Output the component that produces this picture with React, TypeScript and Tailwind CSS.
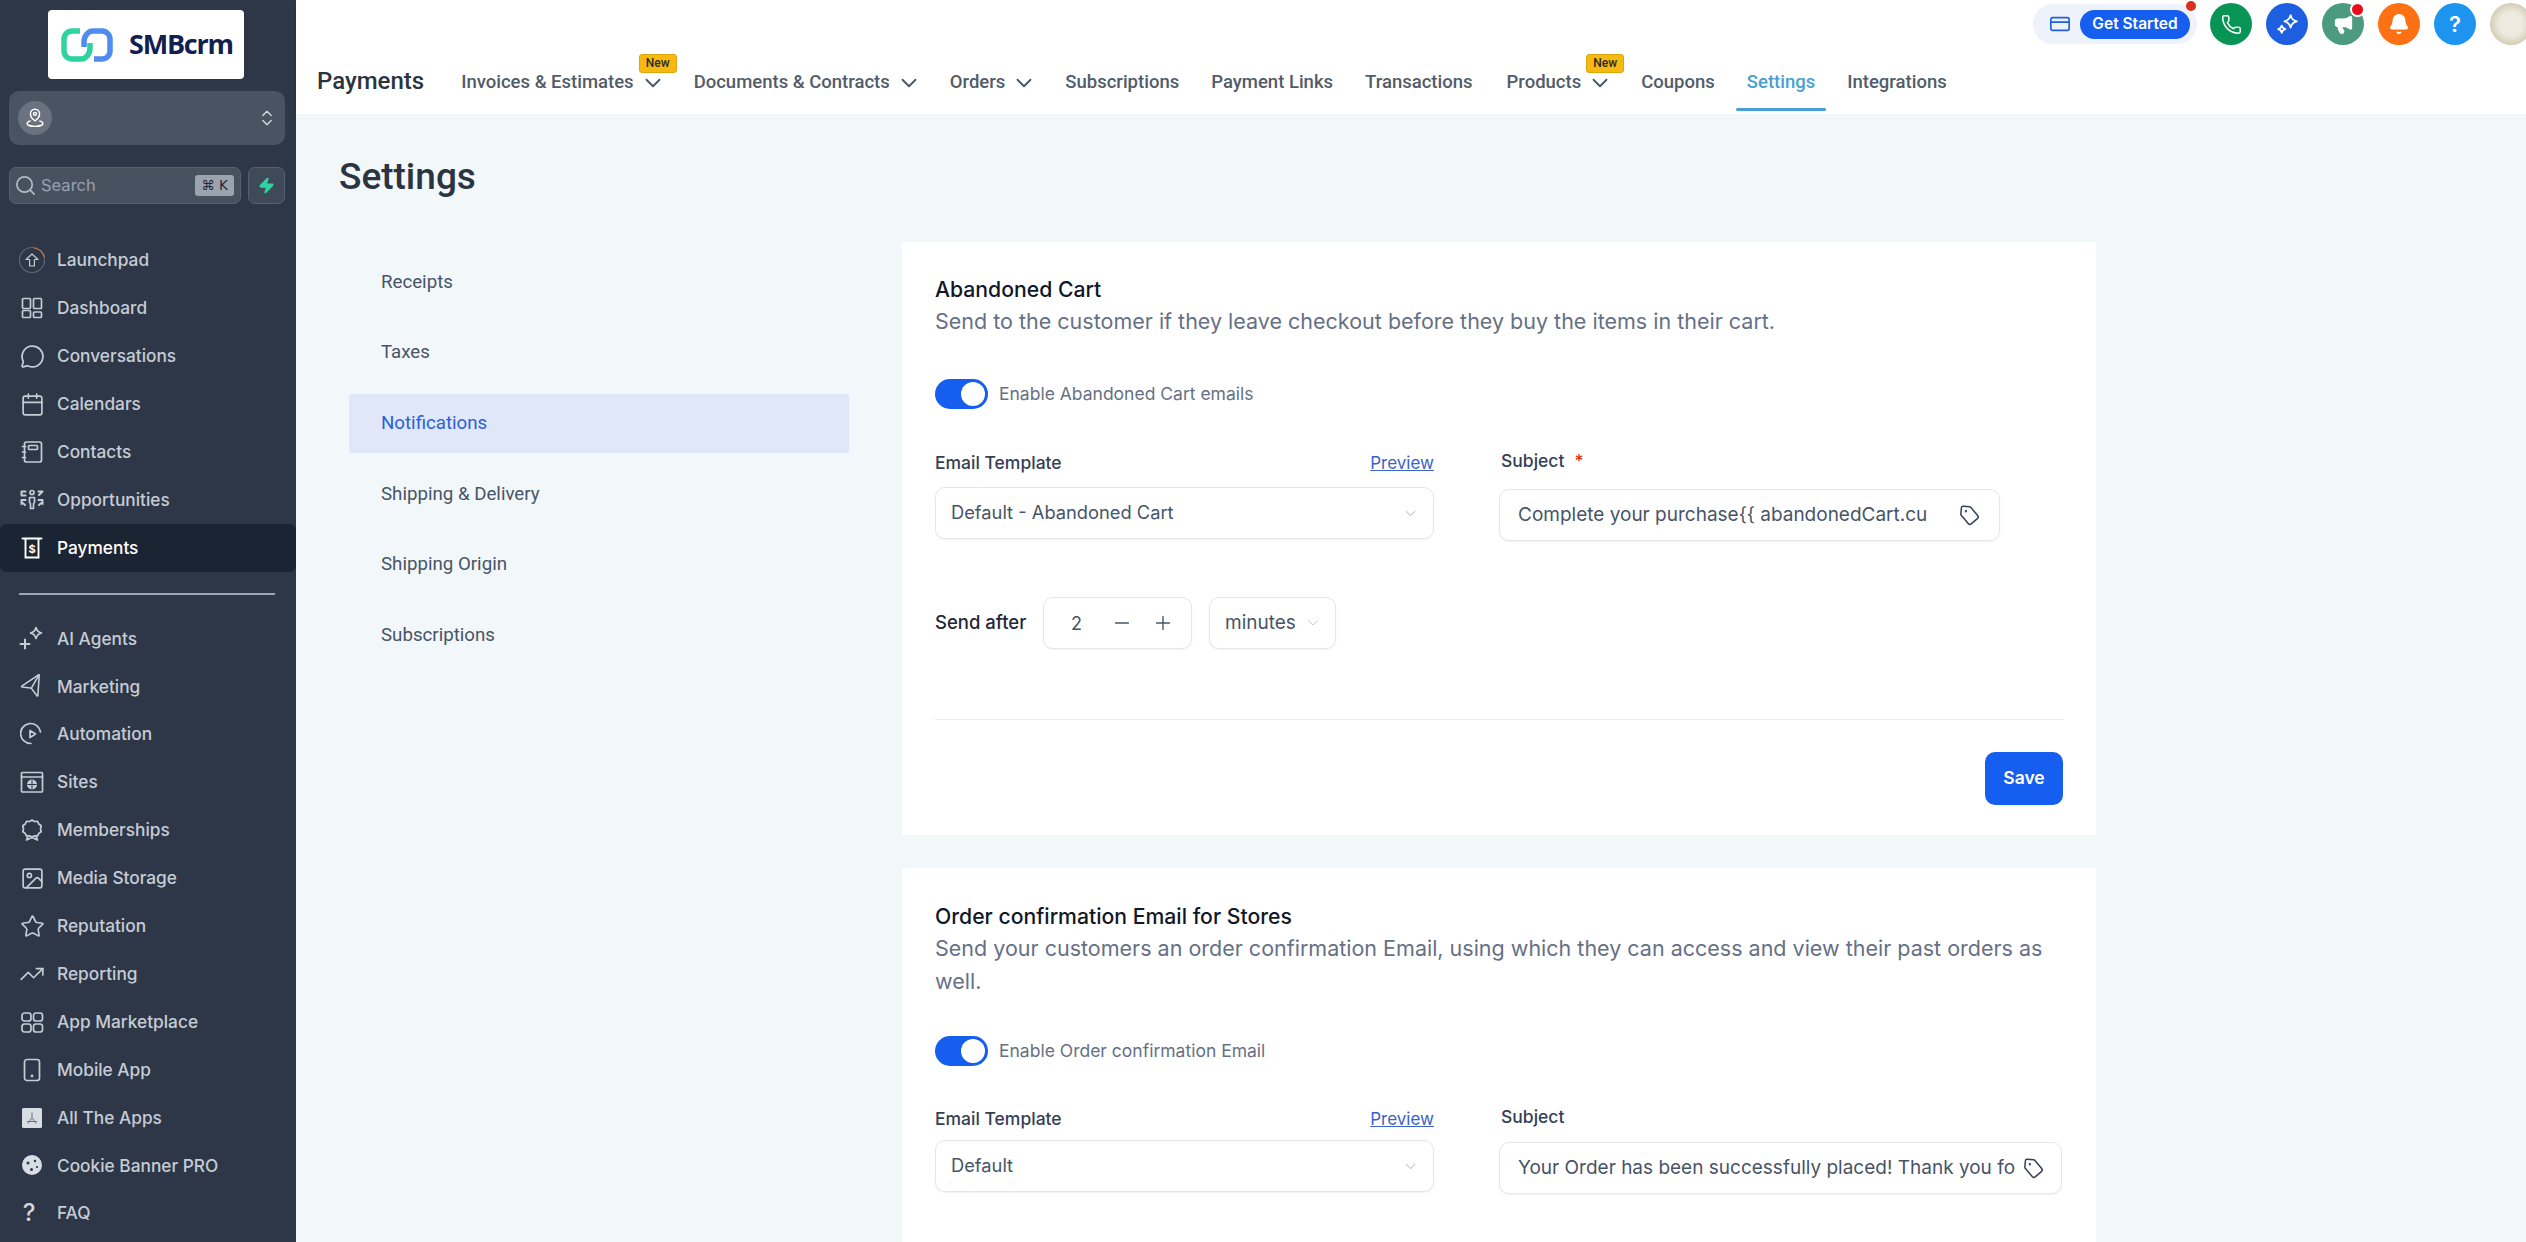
import React from "react";
import { ChevronDown, ChevronsUpDown, MessageCircle, Calendar, Send, Image, Star, TrendingUp, Search, Zap, Minus, Plus, Tag, Phone, Bell, CreditCard, Megaphone } from "lucide-react";

const S = (p: { children: React.ReactNode }) => (
  <svg viewBox="0 0 24 24" width="24" height="24" fill="none" stroke="currentColor" strokeWidth="1.7" strokeLinecap="round" strokeLinejoin="round">{p.children}</svg>
);

const Launch = () => (
  <svg viewBox="0 0 28 28" width="28" height="28" fill="none" strokeWidth="1.2">
    <circle cx="14" cy="14" r="12.5" stroke="#5b6675" />
    <path d="M16 2a12.5 12.5 0 0 1 10.3 9" stroke="#c77d45" />
    <path d="M14 8l-6 5.5h3.6V20h4.8v-6.5H20z" stroke="#c5ccd6" strokeLinejoin="round" />
  </svg>
);
const Dash = () => <S><rect x="2.5" y="2.5" width="8" height="10" rx="1" /><rect x="13.5" y="2.5" width="8" height="10" rx="1" /><rect x="2.5" y="14.5" width="8" height="7" rx="1" /><rect x="13.5" y="16" width="8" height="5.5" rx="1" /></S>;
const Contacts = () => <S><rect x="4.5" y="2" width="17" height="20" rx="2" /><rect x="8.5" y="5.5" width="9" height="4" rx="1" /><path d="M2.5 6.5h3M2.5 12h3M2.5 17.5h3" /></S>;
const Opp = () => (
  <S>
    <circle cx="12" cy="4.5" r="2" />
    <path d="M9.5 9.500h5v5l-1 1v5h-3v-5l-1-1z" />
    <path d="M1.500 3.500h4M1.500 3.500v3M5.500 7.500h-4" strokeWidth="2" />
    <path d="M22.500 3.500h-4M22.500 3.500l-3.500 3.500" strokeWidth="2" />
    <path d="M1.500 12h4M1.500 16v-3M5 17l-3.500-3M22.500 12h-4M22.500 16v-3M19 17l3.500-3" strokeWidth="2" />
  </S>
);
const Pay = () => (
  <svg viewBox="0 0 24 24" width="24" height="24" fill="none" stroke="#fff" strokeWidth="1.9">
    <path d="M2.500 2.500h19" strokeLinecap="round" />
    <path d="M5.500 3v18.500h13V3" />
    <text x="12" y="16.500" textAnchor="middle" fontSize="11" fontWeight="700" fill="#fff" stroke="none" fontFamily="Inter, sans-serif">$</text>
  </svg>
);
const AI = () => (
  <svg viewBox="0 0 28 28" width="28" height="28" fill="none" stroke="currentColor" strokeWidth="1.7" strokeLinecap="round" strokeLinejoin="round">
    <path d="M18 2.500c.800 3.500 2 4.700 5.500 5.500-3.500.800-4.700 2-5.500 5.500-.800-3.500-2-4.700-5.500-5.500 3.500-.800 4.700-2 5.500-5.500z" />
    <path d="M7 14.500v9M2.500 19h9" strokeWidth="2" />
  </svg>
);
const Auto = () => <S><path d="M20.500 10A10 10 0 1 0 11 21.500" /><path d="M10 8.500l5.500 3.500-5.500 3.500z" /></S>;
const Sites = () => <S><rect x="1.500" y="2.500" width="21" height="19.500" rx="1" /><path d="M1.500 7h21" /><circle cx="12" cy="14.500" r="4.200" fill="currentColor" /><path d="M7.800 14.500h8.400M12 10.300v8.400" stroke="#2d3748" strokeWidth="1" /></S>;
const Member = () => <S><path d="M12 2l2.500 1.500 3-.2 1.300 2.700 2.400 1.800-.7 3 .7 3-2.400 1.600L17.500 18l-3-.2L12 19l-2.500-1.200-3 .2-1.300-2.600-2.400-1.600.7-3-.7-3L5.200 6l1.300-2.700 3 .2z" /><path d="M8 18l-1.500 4 5.500-2.500 5.500 2.500L16 18" /></S>;
const Mobile = () => <S><rect x="4.500" y="1.500" width="15" height="21" rx="2.500" /><circle cx="12" cy="18" r=".6" fill="currentColor" /></S>;
const Market = () => <S><rect x="2" y="3" width="9" height="8" rx="2.500" /><rect x="13.500" y="3" width="9" height="8" rx="2.500" /><rect x="2" y="14" width="9" height="8" rx="2.500" /><rect x="13.500" y="14" width="9" height="8" rx="2.500" /></S>;
const AllApps = () => (
  <svg viewBox="0 0 20 20" width="20" height="20">
    <rect width="20" height="20" rx="1.500" fill="#d8dde3" />
    <path d="M10 4.500v5M10 9.500l-4 6M10 9.500l4 6M5 13.500h10" stroke="#6b7280" strokeWidth="1" fill="none" />
  </svg>
);
const Cookie = () => (
  <svg viewBox="0 0 20 20" width="20" height="20">
    <circle cx="10" cy="10" r="10" fill="#d8dde3" />
    <circle cx="6" cy="8" r="1.500" fill="#2d3748" /><circle cx="13" cy="6" r="1.200" fill="#2d3748" /><circle cx="9.500" cy="14.500" r="1.500" fill="#2d3748" /><circle cx="15" cy="12" r="1.100" fill="#2d3748" />
  </svg>
);

type Nav = { label: string; icon: React.ReactNode; active?: boolean };
const top: Nav[] = [
  { label: "Launchpad", icon: <Launch /> },
  { label: "Dashboard", icon: <Dash /> },
  { label: "Conversations", icon: <MessageCircle size={25} strokeWidth={1.7} /> },
  { label: "Calendars", icon: <Calendar size={25} strokeWidth={1.6} /> },
  { label: "Contacts", icon: <Contacts /> },
  { label: "Opportunities", icon: <Opp /> },
  { label: "Payments", icon: <Pay />, active: true },
];
const bottom: Nav[] = [
  { label: "AI Agents", icon: <AI /> },
  { label: "Marketing", icon: <Send size={24} strokeWidth={1.6} className="-rotate-[15deg]" /> },
  { label: "Automation", icon: <Auto /> },
  { label: "Sites", icon: <Sites /> },
  { label: "Memberships", icon: <Member /> },
  { label: "Media Storage", icon: <Image size={25} strokeWidth={1.6} /> },
  { label: "Reputation", icon: <Star size={25} strokeWidth={1.6} /> },
  { label: "Reporting", icon: <TrendingUp size={26} strokeWidth={1.5} /> },
  { label: "App Marketplace", icon: <Market /> },
  { label: "Mobile App", icon: <Mobile /> },
  { label: "All The Apps", icon: <AllApps /> },
  { label: "Cookie Banner PRO", icon: <Cookie /> },
  { label: "FAQ", icon: <span className="text-[24px] font-medium text-[#d3d8df] -ml-[6px]">?</span> },
];

const NavRow = ({ n }: { n: Nav }) => (
  <div className={`flex h-[47.9px] items-center rounded-[6px] text-[17.3px] font-medium ${n.active ? "bg-[#1b2433] text-white" : "text-[#c6ccd5]"}`}>
    <div className={`flex w-[57px] shrink-0 items-center justify-center pl-[7px] ${n.active ? "text-white" : "text-[#c6ccd5]"}`}>{n.icon}</div>
    <span>{n.label}</span>
  </div>
);

const Logo = () => (
  <svg viewBox="0 0 52 34" width="52" height="34" fill="none" strokeWidth="5.5">
    <path d="M33 31H41a8 8 0 0 0 8-8V11a8 8 0 0 0-8-8H32C27 3 23 8 23 14V19" stroke="#4f8cf0" />
    <path d="M19 3H11a8 8 0 0 0-8 8V23a8 8 0 0 0 8 8H20C25 31 29 26 29 20V15" stroke="#2fd3a0" />
  </svg>
);

const Sidebar = () => (
  <aside className="flex h-full w-[296px] shrink-0 flex-col bg-[#2d3748] font-['Inter',sans-serif]">
    <div className="ml-[48px] mt-[10px] flex h-[69px] w-[196px] items-center rounded-[4px] bg-white pl-[13px]">
      <Logo />
      <span className="ml-[16px] font-['Open_Sans',sans-serif] text-[27px] font-bold tracking-[-1.2px] text-[#12204f]">SMBcrm</span>
    </div>
    <div className="ml-[9px] mr-[11px] mt-[12px] flex h-[54px] items-center justify-between rounded-[10px] bg-[#4a5361] pl-[9px] pr-[8px]">
      <div className="flex h-[34px] w-[34px] items-center justify-center rounded-full bg-[#6a7280] text-white">
        <svg viewBox="0 0 24 24" width="20" height="20" fill="none" stroke="currentColor" strokeWidth="1.700"><path d="M12 15.500s5.500-3.500 5.500-8.500a5.500 5.500 0 0 0-11 0c0 5 5.500 8.500 5.500 8.500z" /><circle cx="12" cy="7" r="1.800" /><path d="M7 15.500c-2.500.6-4.500 1.700-4.500 3C2.500 20.500 7 22 12 22s9.500-1.500 9.500-3.500c0-1.300-2-2.400-4.500-3" /></svg>
      </div>
      <ChevronsUpDown size={20} strokeWidth={1.6} className="text-[#d5d9df]" />
    </div>
    <div className="mx-[9px] mt-[22px] flex h-[37px] gap-[7px]">
      <div className="flex w-[232px] items-center rounded-[7px] border border-[#566070] bg-[#475160] pl-[4px] pr-[6px]">
        <Search size={23} strokeWidth={1.800} className="text-[#b3bac4]" />
        <span className="ml-[4px] flex-1 text-[16.500px] text-[#98a1ad]">Search</span>
        <span className="flex h-[21px] w-[39px] items-center justify-center rounded-[3px] bg-[#9ba3ae] font-['DejaVu_Sans',sans-serif] text-[13.500px] text-[#1f2937]">⌘ K</span>
      </div>
      <div className="flex w-[37px] items-center justify-center rounded-[7px] border border-[#566070] bg-[#3f4a59]">
        <Zap size={17} fill="#2fd3a0" stroke="#2fd3a0" />
      </div>
    </div>
    <nav className="mt-[32.500px] flex flex-col">
      {top.map((n) => <NavRow key={n.label} n={n} />)}
    </nav>
    <div className="ml-[19px] mr-[21px] mb-[20px] mt-[21px] h-[2px] bg-[#9aa6b5]" />
    <nav className="flex flex-col">
      {bottom.map((n) => <NavRow key={n.label} n={n} />)}
    </nav>
  </aside>
);

const Chev = () => <ChevronDown size={26} strokeWidth={1.700} className="-mr-[4px] ml-[6px] text-[#475467]" />;
const Badge = () => (
  <span className="absolute -top-[15px] right-[-15px] flex h-[19px] w-[38px] items-center justify-center rounded-[3px] border border-[#dfa50c] bg-[#f6b90f] font-['Roboto',sans-serif] text-[12px] leading-none text-[#2b2b2b]">New</span>
);

const Tab = ({ label, chev, isNew, active, cls }: { label: string; chev?: boolean; isNew?: boolean; active?: boolean; cls?: string }) => (
  <div className={`relative flex items-center text-[18.500px] font-medium ${active ? "text-[#4a9fd1]" : "text-[#525c69]"} ${cls ?? ""}`}>
    <span>{label}</span>
    {chev && <Chev />}
    {isNew && <Badge />}
    {active && <span className="absolute -bottom-[15px] -left-[11px] -right-[11px] h-[3px] rounded-full bg-[#4a9fd1]" />}
  </div>
);

const Circle = ({ cls, children, dot }: { cls: string; children: React.ReactNode; dot?: boolean }) => (
  <div className={`relative flex h-[42px] w-[42px] shrink-0 items-center justify-center rounded-full text-white ${cls}`}>
    {children}
    {dot && <span className="absolute -right-[1px] -top-[1px] h-[15px] w-[15px] rounded-full border-[2px] border-white bg-[#ef0a1a]" />}
  </div>
);

const Header = () => (
  <header className="flex h-[114px] shrink-0 flex-col bg-white font-['Roboto',sans-serif] shadow-[0_1px_3px_rgba(0,0,0,0.12)]">
    <div className="flex h-[48px] shrink-0 items-center justify-end gap-[14px] pr-0 font-['Inter',sans-serif]">
      <div className="relative mr-[-1px] flex h-[40px] w-[164px] items-center rounded-full bg-[#eef2fb] pl-[16px]">
        <CreditCard size={22} strokeWidth={1.800} className="text-[#1d5fe0]" />
        <span className="ml-[9px] flex h-[29px] w-[110px] items-center justify-center rounded-full bg-[#155eef] text-[15.500px] font-semibold text-white">Get Started</span>
        <span className="absolute -top-[3px] right-[1px] h-[10px] w-[10px] rounded-full bg-[#d9301f]" />
      </div>
      <Circle cls="bg-[#079455]"><Phone size={21} strokeWidth={1.700} /></Circle>
      <Circle cls="bg-[#1d5fe0]">
        <svg viewBox="0 0 24 24" width="25" height="25" fill="none" stroke="#fff" strokeWidth="1.700" strokeLinejoin="round"><path d="M15 3c.800 3.800 2.200 5.200 6 6-3.800.800-5.200 2.200-6 6-.800-3.800-2.200-5.200-6-6 3.800-.800 5.200-2.200 6-6z" /><path d="M6.500 13c.500 2.300 1.200 3 3.500 3.500-2.300.500-3 1.200-3.500 3.500-.500-2.300-1.200-3-3.500-3.500 2.300-.500 3-1.200 3.500-3.500z" /></svg>
      </Circle>
      <Circle cls="bg-[#4c9a7f]" dot><Megaphone size={21} fill="#fff" strokeWidth={1.800} /></Circle>
      <Circle cls="bg-[#fd7014]"><Bell size={22} fill="#fff" strokeWidth={1.800} /></Circle>
      <Circle cls="bg-[#1c94f0]"><span className="text-[22px] font-semibold leading-none">?</span></Circle>
      <div className="mr-[-6px] h-[42px] w-[42px] shrink-0 rounded-full bg-[radial-gradient(circle,#eeeadf_40%,#b9b08f_100%)]" />
    </div>
    <div className="flex flex-1 items-center gap-[32px] pl-[21px] pt-[3px]">
      <span className="-mt-[3px] mr-[5px] text-[24px] font-medium text-[#2b3440]">Payments</span>
      <Tab label="Invoices & Estimates" chev isNew />
      <Tab label="Documents & Contracts" chev />
      <Tab label="Orders" chev />
      <Tab label="Subscriptions" />
      <Tab label="Payment Links" />
      <Tab label="Transactions" />
      <Tab label="Products" chev isNew cls="ml-[2px]" />
      <Tab label="Coupons" />
      <Tab label="Settings" active />
      <Tab label="Integrations" />
    </div>
  </header>
);

const Toggle = () => (
  <div className="flex h-[30px] w-[53px] items-center justify-end rounded-full bg-[#155eef] pr-[3px]">
    <div className="h-[24px] w-[24px] rounded-full bg-white" />
  </div>
);

const Select = ({ text }: { text: string }) => (
  <div className="flex h-[52px] w-[499px] items-center justify-between rounded-[10px] border border-[#e4e7ec] bg-white pl-[15px] pr-[14px] text-[18.300px] text-[#475467] shadow-[0_1px_2px_rgba(16,24,40,0.06)]">
    <span>{text}</span>
    <ChevronDown size={17} strokeWidth={1.500} className="text-[#c4c9d1]" />
  </div>
);

const Input = ({ text, w, gap }: { text: string; w: string; gap: string }) => (
  <div className={`flex h-[52px] items-center rounded-[10px] border border-[#e4e7ec] bg-white pl-[18px] text-[19px] text-[#475467] shadow-[0_1px_2px_rgba(16,24,40,0.06)] ${w}`}>
    <span className={`overflow-hidden whitespace-nowrap ${gap}`}>{text}</span>
    <Tag size={21} strokeWidth={1.700} className="shrink-0 rotate-[5deg] text-[#344054]" />
  </div>
);

const Fields = ({ sel, inp, w, gap, star, selGap, inpGap }: { sel: string; inp: string; w: string; gap: string; star?: boolean; selGap: string; inpGap: string }) => (
  <div className="flex gap-[65px]">
    <div className="flex w-[499px] flex-col">
      <div className="flex h-[24px] items-center justify-between text-[17.500px] font-medium">
        <span className="text-[#344054]">Email Template</span>
        <span className="pt-[1px] text-[17px] font-normal text-[#3b62c9] underline">Preview</span>
      </div>
      <div className={selGap}><Select text={sel} /></div>
    </div>
    <div className="flex flex-col">
      <div className="-mt-[2px] flex h-[24px] items-center pl-[2px] text-[17.500px] font-medium text-[#344054]">
        <span>Subject</span>
        {star && <span className="ml-[10px] text-[#d92d20]">*</span>}
      </div>
      <div className={inpGap}><Input text={inp} w={w} gap={gap} /></div>
    </div>
  </div>
);

const Settings = () => (
  <div className="flex-1 overflow-hidden bg-[#f2f7fa] font-['Roboto',sans-serif]">
    <h1 className="ml-[43px] mt-[42px] h-[42px] text-[37px] font-medium leading-[42px] text-[#2b3440]">Settings</h1>
    <div className="mt-[44px] flex items-start pl-[53px]">
      <div className="mt-[10.400px] flex w-[500px] shrink-0 flex-col gap-[11.600px]">
        {["Receipts", "Taxes", "Notifications", "Shipping & Delivery", "Shipping Origin", "Subscriptions"].map((t) => (
          <div key={t} className={`flex h-[59px] items-center rounded-[2px] pl-[32px] text-[18.700px] ${t === "Notifications" ? "bg-[#e0e7f8] text-[#2b5fd9]" : "text-[#475467]"}`}>{t}</div>
        ))}
      </div>
      <div className="ml-[53px] flex w-[1194px] flex-col gap-[33px] font-['Inter',sans-serif]">
        <section className="h-[593px] rounded-[2px] bg-white px-[33px] pt-[31px]">
          <h2 className="text-[21.200px] font-medium leading-[32px] text-[#101828]">Abandoned Cart</h2>
          <p className="text-[21.500px] leading-[32px] text-[#667085]">Send to the customer if they leave checkout before they buy the items in their cart.</p>
          <div className="mt-[42px] flex items-center gap-[11px]"><Toggle /><span className="text-[17.500px] text-[#667085]">Enable Abandoned Cart emails</span></div>
          <div className="mt-[42px]">
            <Fields sel="Default - Abandoned Cart" inp="Complete your purchase{{ abandonedCart.cu" w="w-[501px]" gap="w-[410px] mr-[31px]" star selGap="mt-[12px]" inpGap="mt-[16px]" />
          </div>
          <div className="mt-[56px] flex items-center">
            <span className="w-[108px] text-[18.500px] font-medium text-[#1f2937]">Send after</span>
            <div className="flex h-[52px] w-[149px] items-center rounded-[10px] border border-[#e4e7ec] pl-[27px] text-[18px] text-[#475467] shadow-[0_1px_2px_rgba(16,24,40,0.06)]">
              <span className="w-[12px]">2</span>
              <Minus size={22} strokeWidth={1.500} className="ml-[28px]" />
              <Plus size={22} strokeWidth={1.500} className="ml-[19px]" />
            </div>
            <div className="ml-[17px] flex h-[52px] w-[127px] items-center rounded-[10px] border border-[#e4e7ec] pl-[15px] text-[19px] text-[#475467] shadow-[0_1px_2px_rgba(16,24,40,0.06)]">
              <span>minutes</span>
              <ChevronDown size={16} strokeWidth={1.500} className="ml-[9px] text-[#c4c9d1]" />
            </div>
          </div>
          <div className="mt-[70px] h-[1px] bg-[#e9ecf0]" />
          <div className="mt-[32px] flex justify-end">
            <button className="flex h-[53px] w-[78px] items-center justify-center rounded-[10px] bg-[#155eef] text-[17.500px] font-semibold text-white">Save</button>
          </div>
        </section>
        <section className="h-[500px] rounded-[2px] bg-white px-[33px] pt-[32px]">
          <h2 className="text-[21.200px] font-medium leading-[32px] text-[#101828]">Order confirmation Email for Stores</h2>
          <p className="text-[21.500px] leading-[32.500px] text-[#667085]">Send your customers an order confirmation Email, using which they can access and view their past orders as well.</p>
          <div className="mt-[39px] flex items-center gap-[11px]"><Toggle /><span className="text-[17.500px] text-[#667085]">Enable Order confirmation Email</span></div>
          <div className="mt-[41px]">
            <Fields sel="Default" inp="Your Order has been successfully placed! Thank you fo" w="w-[563px]" gap="w-[500px] mr-[5px]" selGap="mt-[9px]" inpGap="mt-[13px]" />
          </div>
        </section>
      </div>
    </div>
  </div>
);

export default function App() {
  return (
    <div className="flex h-[1242px] w-[2526px] overflow-hidden bg-[#f2f7fa]">
      <Sidebar />
      <main className="flex min-w-0 flex-1 flex-col">
        <Header />
        <Settings />
      </main>
    </div>
  );
}
